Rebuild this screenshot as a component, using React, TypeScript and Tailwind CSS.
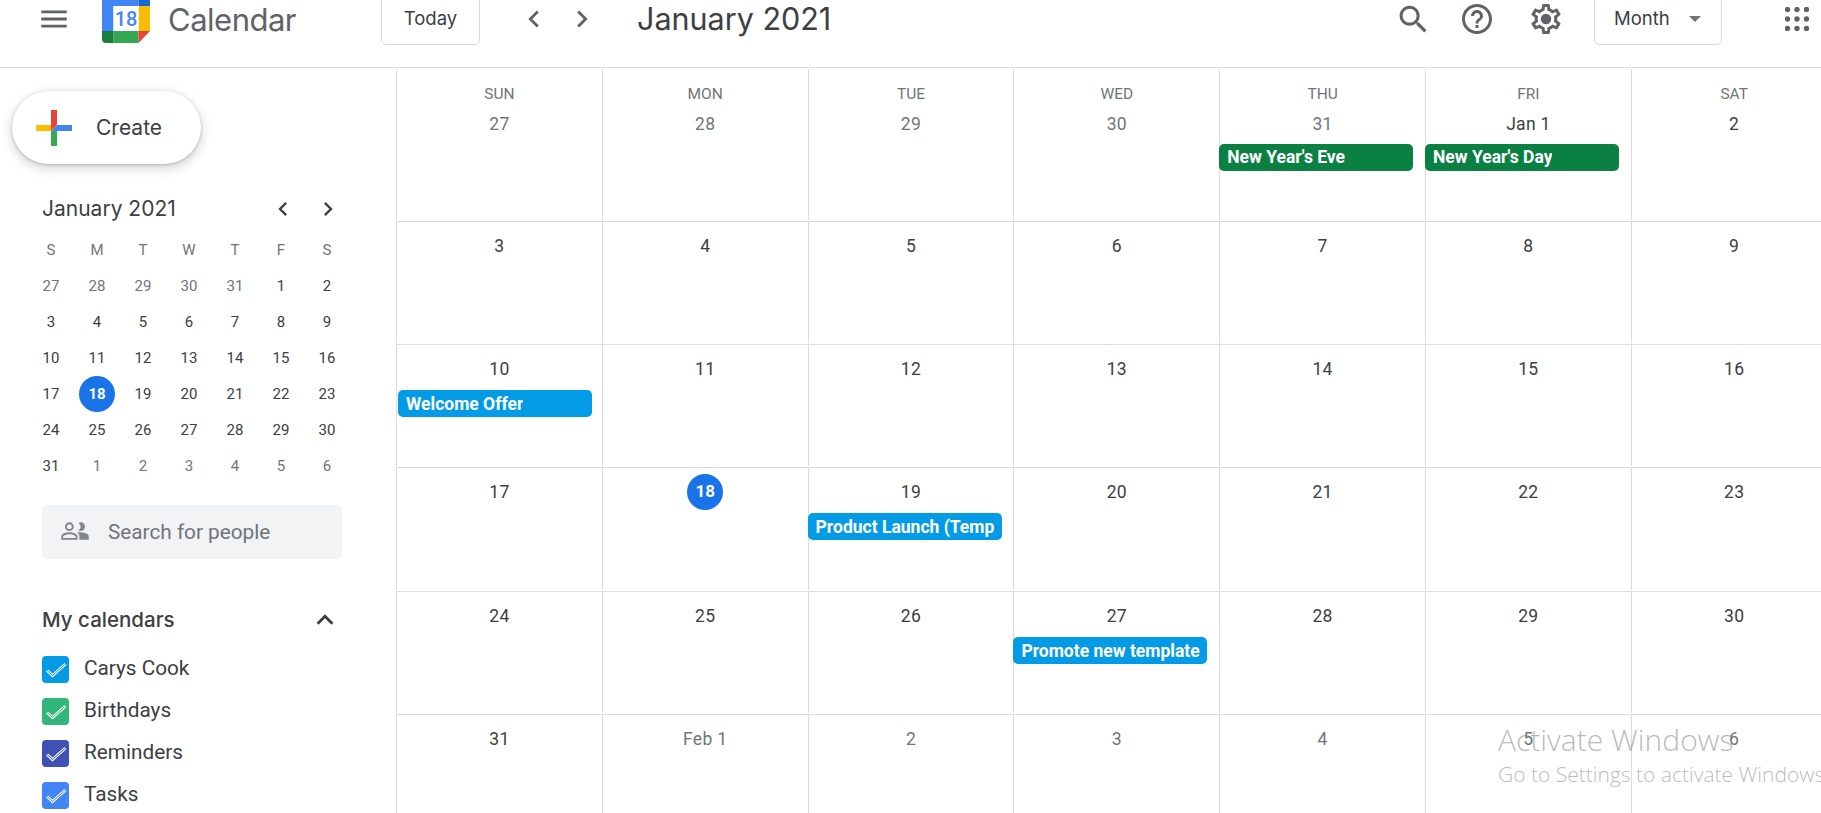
import { ReactNode } from "react";

interface CalendarEvent {
  title: string;
  color: "green" | "blue";
}

interface DayCell {
  label: string;
  muted?: boolean;
  today?: boolean;
  event?: CalendarEvent;
}

const weekdays = ["SUN", "MON", "TUE", "WED", "THU", "FRI", "SAT"];
const miniWeekdays = ["S", "M", "T", "W", "T", "F", "S"];

const day = (label: string | number, extra: Partial<DayCell> = {}): DayCell => ({ label: String(label), ...extra });

const weeks: { height: string; cells: DayCell[] }[] = [
  {
    height: "h-[153px]",
    cells: [
      day(27, { muted: true }),
      day(28, { muted: true }),
      day(29, { muted: true }),
      day(30, { muted: true }),
      day(31, { muted: true, event: { title: "New Year's Eve", color: "green" } }),
      day("Jan 1", { event: { title: "New Year's Day", color: "green" } }),
      day(2),
    ],
  },
  { height: "h-[123px]", cells: [3, 4, 5, 6, 7, 8, 9].map((n) => day(n)) },
  {
    height: "h-[123px]",
    cells: [
      day(10, { event: { title: "Welcome Offer", color: "blue" } }),
      ...[11, 12, 13, 14, 15, 16].map((n) => day(n)),
    ],
  },
  {
    height: "h-[124px]",
    cells: [
      day(17),
      day(18, { today: true }),
      day(19, { event: { title: "Product Launch (Template)", color: "blue" } }),
      ...[20, 21, 22, 23].map((n) => day(n)),
    ],
  },
  {
    height: "h-[123px]",
    cells: [
      day(24),
      day(25),
      day(26),
      day(27, { event: { title: "Promote new templates", color: "blue" } }),
      ...[28, 29, 30].map((n) => day(n)),
    ],
  },
  {
    height: "h-[123px]",
    cells: [
      day(31),
      day("Feb 1", { muted: true }),
      ...[2, 3, 4, 5, 6].map((n) => day(n, { muted: true })),
    ],
  },
];

const miniDays = [
  27, 28, 29, 30, 31, 1, 2, 3, 4, 5, 6, 7, 8, 9, 10, 11, 12, 13, 14, 15, 16, 17, 18, 19, 20, 21, 22, 23, 24, 25, 26, 27,
  28, 29, 30, 31, 1, 2, 3, 4, 5, 6,
];

const calendars = [
  { name: "Carys Cook", box: "bg-[#039be5]", stroke: "#039be5" },
  { name: "Birthdays", box: "bg-[#33b679]", stroke: "#33b679" },
  { name: "Reminders", box: "bg-[#3f51b5]", stroke: "#3f51b5" },
  { name: "Tasks", box: "bg-[#4285f4]", stroke: "#4285f4" },
];

const Icon = ({ size, className, children }: { size: number; className?: string; children: ReactNode }) => (
  <svg width={size} height={size} viewBox="0 0 24 24" fill="currentColor" className={className}>
    {children}
  </svg>
);

const ChevronLeft = ({ size }: { size: number }) => (
  <Icon size={size}>
    <path d="M15.41 7.41L14 6l-6 6 6 6 1.41-1.41L10.83 12z" />
  </Icon>
);

const ChevronRight = ({ size }: { size: number }) => (
  <Icon size={size}>
    <path d="M10 6L8.59 7.41 13.17 12l-4.58 4.59L10 18l6-6z" />
  </Icon>
);

const CalendarLogo = () => (
  <svg width="48" height="48" viewBox="0 0 48 48" className="shrink-0">
    <path d="M4 0h32.5v11H11.5v25H0V4a4 4 0 0 1 4-4z" fill="#4285f4" />
    <path d="M36.5 0H44a4 4 0 0 1 4 4v7H36.5z" fill="#1967d2" />
    <rect x="36.5" y="11" width="11.5" height="25" fill="#fbbc04" />
    <rect x="11.5" y="36" width="25" height="12" fill="#34a853" />
    <path d="M0 36h11.5v12H4a4 4 0 0 1-4-4z" fill="#188038" />
    <path d="M36.5 36H48L36.5 48z" fill="#ea4335" />
    <rect x="11.5" y="11" width="25" height="25" fill="#fff" />
    <text x="24" y="31" textAnchor="middle" fontSize="20" fontWeight="500" fill="#4285f4" fontFamily="Roboto, sans-serif">
      18
    </text>
  </svg>
);

const PlusLogo = () => (
  <svg width="36" height="36" viewBox="0 0 36 36" className="shrink-0">
    <path d="M15 0h6v15l-6 6z" fill="#ea4335" />
    <path d="M0 15h15v6H0z" fill="#fbbc04" />
    <path d="M21 15h15v6H15z" fill="#4285f4" />
    <path d="M15 21h6v15h-6z" fill="#34a853" />
  </svg>
);

const Header = () => (
  <header className="flex h-[68px] items-center border-b border-[#dadce0] pb-[29px] text-[#5f6368]">
    <Icon size={34} className="ml-[37px]">
      <path d="M3 18h18v-2H3v2zm0-5h18v-2H3v2zm0-7v2h18V6H3z" />
    </Icon>
    <div className="ml-[31px]">
      <CalendarLogo />
    </div>
    <span className="ml-[18px] w-[129px] font-['Inter',sans-serif] text-[31px] leading-none tracking-[-0.5px] whitespace-nowrap">Calendar</span>
    <button className="ml-[84px] flex h-[52px] w-[99px] items-center justify-center rounded-[5px] border border-[#dadce0] font-['Inter',sans-serif] text-[18.500px] text-[#3c4043]">
      Today
    </button>
    <div className="ml-[37px]">
      <ChevronLeft size={34} />
    </div>
    <div className="ml-[14px]">
      <ChevronRight size={34} />
    </div>
    <span className="ml-[38px] font-['Inter',sans-serif] text-[30.500px] leading-none text-[#3c4043]">January 2021</span>
    <div className="ml-auto">
      <Icon size={37}>
        <path d="M15.5 14h-.79l-.28-.27C15.41 12.59 16 11.11 16 9.5 16 5.91 13.09 3 9.5 3S3 5.91 3 9.5 5.91 16 9.5 16c1.61 0 3.09-.59 4.23-1.57l.27.28v.79l5 4.99L20.49 19l-4.99-5zm-6 0C7.01 14 5 11.99 5 9.5S7.01 5 9.5 5 14 7.01 14 9.5 11.99 14 9.5 14z" />
      </Icon>
    </div>
    <div className="ml-[27px]">
      <Icon size={36}>
        <path d="M11 18h2v-2h-2v2zm1-16C6.48 2 2 6.48 2 12s4.48 10 10 10 10-4.48 10-10S17.52 2 12 2zm0 18c-4.41 0-8-3.59-8-8s3.59-8 8-8 8 3.59 8 8-3.59 8-8 8zm0-14c-2.21 0-4 1.79-4 4h2c0-1.1.9-2 2-2s2 .9 2 2c0 2-3 1.75-3 5h2c0-2.25 3-2.5 3-5 0-2.21-1.79-4-4-4z" />
      </Icon>
    </div>
    <div className="ml-[33px]">
      <Icon size={36}>
        <path d="M19.43 12.98c.04-.32.07-.64.07-.98 0-.34-.03-.66-.07-.98l2.11-1.65c.19-.15.24-.42.12-.64l-2-3.46c-.09-.16-.26-.25-.44-.25-.06 0-.12.01-.17.03l-2.49 1c-.52-.4-1.08-.73-1.69-.98l-.38-2.65C14.46 2.18 14.25 2 14 2h-4c-.25 0-.46.18-.49.42l-.38 2.65c-.61.25-1.17.59-1.69.98l-2.49-1c-.06-.02-.12-.03-.18-.03-.17 0-.34.09-.43.25l-2 3.46c-.13.22-.07.49.12.64l2.11 1.65c-.04.32-.07.65-.07.98 0 .33.03.66.07.98l-2.11 1.65c-.19.15-.24.42-.12.64l2 3.46c.09.16.26.25.44.25.06 0 .12-.01.17-.03l2.49-1c.52.4 1.08.73 1.69.98l.38 2.65c.03.24.24.42.49.42h4c.25 0 .46-.18.49-.42l.38-2.65c.61-.25 1.17-.59 1.69-.98l2.49 1c.06.02.12.03.18.03.17 0 .34-.09.43-.25l2-3.46c.12-.22.07-.49-.12-.64l-2.11-1.65zm-1.98-1.71c.04.31.05.52.05.73 0 .21-.02.43-.05.73l-.14 1.13.89.7 1.08.84-.7 1.21-1.27-.51-1.04-.42-.9.68c-.43.32-.84.56-1.25.73l-1.06.43-.16 1.13-.2 1.35h-1.4l-.19-1.35-.16-1.13-1.06-.43c-.43-.18-.83-.41-1.23-.71l-.91-.7-1.06.43-1.27.51-.7-1.21 1.08-.84.89-.7-.14-1.13c-.03-.31-.05-.54-.05-.74s.02-.43.05-.73l.14-1.13-.89-.7-1.08-.84.7-1.21 1.27.51 1.04.42.9-.68c.43-.32.84-.56 1.25-.73l1.06-.43.16-1.13.2-1.35h1.39l.19 1.35.16 1.13 1.06.43c.43.18.83.41 1.23.71l.91.7 1.06-.43 1.27-.51.7 1.21-1.07.85-.89.7.14 1.13z" />
        <circle cx="12" cy="12" r="3.500" />
      </Icon>
    </div>
    <button className="ml-[30px] flex h-[52px] w-[128px] items-center rounded-[5px] border border-[#dadce0] pl-[19px] font-['Inter',sans-serif] text-[18.500px] text-[#3c4043]">
      Month
      <span className="ml-[19px] h-0 w-0 border-x-[6.5px] border-t-[6.5px] border-x-transparent border-t-[#70757a]" />
    </button>
    <svg width="24" height="24" viewBox="0 0 24 24" fill="currentColor" className="mr-[12px] ml-[63px]">
      {[2.5, 12, 21.5].flatMap((cy) =>
        [2.5, 12, 21.5].map((cx) => <circle key={`${cx}-${cy}`} cx={cx} cy={cy} r="2.7" />),
      )}
    </svg>
  </header>
);

const MiniCalendar = () => (
  <section>
    <div className="mt-[27px] flex h-[36px] items-center pl-[42px] text-[#3c4043]">
      <span className="mb-px w-[227px] font-['Inter',sans-serif] text-[21px] whitespace-nowrap">January 2021</span>
      <ChevronLeft size={28} />
      <div className="ml-[17px]">
        <ChevronRight size={28} />
      </div>
    </div>
    <div className="mt-[5px] ml-[28px] grid grid-cols-[repeat(7,46px)] auto-rows-[36px] items-center justify-items-center text-[15px]">
      {miniWeekdays.map((d, i) => (
        <span key={i} className="text-[#70757a]">
          {d}
        </span>
      ))}
      {miniDays.map((n, i) => {
        const muted = i < 5 || i >= 36;
        const today = i === 22;
        if (today) {
          return (
            <span key={i} className="flex h-[36px] w-[36px] items-center justify-center rounded-full bg-[#1a73e8] font-bold text-white">
              {n}
            </span>
          );
        }
        return (
          <span key={i} className={muted ? "text-[#70757a]" : "text-[#3c4043]"}>
            {n}
          </span>
        );
      })}
    </div>
  </section>
);

const Sidebar = () => (
  <aside className="w-[396px] shrink-0">
    <button className="mt-[23px] ml-[12px] flex h-[73px] w-[189px] items-center rounded-full bg-white pl-[24px] shadow-[0_1px_3px_rgba(60,64,67,0.3),0_4px_8px_3px_rgba(60,64,67,0.15)]">
      <PlusLogo />
      <span className="ml-[24px] font-['Inter',sans-serif] text-[21px] text-[#3c4043]">Create</span>
    </button>
    <MiniCalendar />
    <div className="mt-[21px] ml-[42px] flex h-[54px] w-[300px] items-center rounded-[5px] bg-[#f1f3f4] pl-[18px] text-[#70757a]">
      <svg width="30" height="30" viewBox="0 0 24 24" fill="#80868b" className="mb-[3px] shrink-0">
        <path d="M7.5 13C5.33 13 1 14.08 1 16.25V19h13v-2.75C14 14.08 9.67 13 7.5 13zm5 4.5h-10v-1.25c0-.54 2.56-1.75 5-1.75s5 1.21 5 1.75v1.25zM7.5 12c1.93 0 3.5-1.57 3.5-3.5S9.43 5 7.5 5 4 6.57 4 8.5 5.57 12 7.5 12zm0-5.5c1.1 0 2 .9 2 2s-.9 2-2 2-2-.9-2-2 .9-2 2-2z" />
        <path d="M16.5 5c-.6 0-1.2.2-1.7.5.9.7 1.700 1.800 1.700 3s-.8 2.300-1.700 3c.5.3 1.100.5 1.700.5 1.930 0 3.500-1.570 3.500-3.500S18.430 5 16.500 5zM17 13c3 .2 6 1.300 6 3.250V19h-7.500v-2.750c0-1.300-.7-2.400-2-3.250z" />
      </svg>
      <span className="mt-px ml-[18px] text-[20.750px]">Search for people</span>
    </div>
    <div className="mt-[46px] flex h-[30px] items-center pl-[42px] text-[#3c4043]">
      <span className="w-[266px] font-['Inter',sans-serif] text-[20.500px] font-medium whitespace-nowrap">My calendars</span>
      <Icon size={34}>
        <path d="M12 8l-6 6 1.41 1.41L12 10.830l4.590 4.580L18 14z" />
      </Icon>
    </div>
    <ul className="mt-[13px] pl-[42px]">
      {calendars.map((c) => (
        <li key={c.name} className="flex h-[42px] items-center">
          <span className={`flex h-[27px] w-[27px] items-center justify-center rounded-[4px] ${c.box}`}>
            <svg width="27" height="27" viewBox="0 0 27 27" fill="none">
              <path d="M5 14.500l5.500 5L23.500 8" stroke="#fff" strokeWidth="3" />
              <path d="M5 14.500l5.500 5L23.500 8" stroke={c.stroke} strokeWidth="1" />
            </svg>
          </span>
          <span className="ml-[15px] text-[20.750px] text-[#3c4043]">{c.name}</span>
        </li>
      ))}
    </ul>
  </aside>
);

const EventChip = ({ event, firstWeek, firstColumn }: { event: CalendarEvent; firstWeek: boolean; firstColumn: boolean }) => (
  <div
    className={`flex h-[27px] w-[194px] items-center rounded-[5px] pr-[7px] pl-[8px] ${firstWeek ? "mt-[2px]" : "mt-[3px] pt-px"} ${
      firstColumn ? "ml-px" : "-ml-px"
    } ${event.color === "green" ? "bg-[#0b8043]" : "bg-[#039be5]"}`}
  >
    <span className="overflow-hidden text-[17.500px] font-bold whitespace-nowrap text-white">{event.title}</span>
  </div>
);

const DayNumber = ({ cell }: { cell: DayCell }) => {
  if (cell.today) {
    return (
      <div className="flex h-[36px] items-center justify-center">
        <span className="flex h-[36px] w-[36px] items-center justify-center rounded-full bg-[#1a73e8] text-[17px] font-bold text-white">
          {cell.label}
        </span>
      </div>
    );
  }
  return (
    <div className={`flex h-[36px] items-center justify-center text-[17.500px] tracking-[0.3px] ${cell.muted ? "text-[#70757a]" : "text-[#3c4043]"}`}>
      {cell.label}
    </div>
  );
};

const MonthGrid = () => (
  <main className="w-[1442px] shrink-0 pt-px">
    {weeks.map((week, w) => (
      <div key={w} className={`border-b border-[#dadce0] pb-px ${week.height}`}>
        <div className="grid h-full grid-cols-[repeat(7,205.8px)]">
          {week.cells.map((cell, i) => (
            <div key={i} className={`border-l border-[#dadce0] ${w === 0 ? "pt-[15px]" : "pt-[6px]"}`}>
              {w === 0 && (
                <div className="mb-[2px] h-[20px] text-center text-[15.500px] leading-[20px] text-[#70757a]">{weekdays[i]}</div>
              )}
              <DayNumber cell={cell} />
              {cell.event && <EventChip event={cell.event} firstWeek={w === 0} firstColumn={i === 0} />}
            </div>
          ))}
        </div>
      </div>
    ))}
  </main>
);

export default function App() {
  return (
    <div className="relative h-[813px] w-full overflow-hidden bg-white font-['Roboto',sans-serif]">
      <Header />
      <div className="flex">
        <Sidebar />
        <MonthGrid />
      </div>
      <div className="pointer-events-none absolute top-[722px] left-[1498px] font-['Open_Sans',sans-serif] font-light whitespace-nowrap text-[#8a8a8a]/60">
        <div className="text-[30px] leading-[36px]">Activate Windows</div>
        <div className="mt-[3px] text-[21px] leading-[26px]">Go to Settings to activate Windows.</div>
      </div>
    </div>
  );
}
